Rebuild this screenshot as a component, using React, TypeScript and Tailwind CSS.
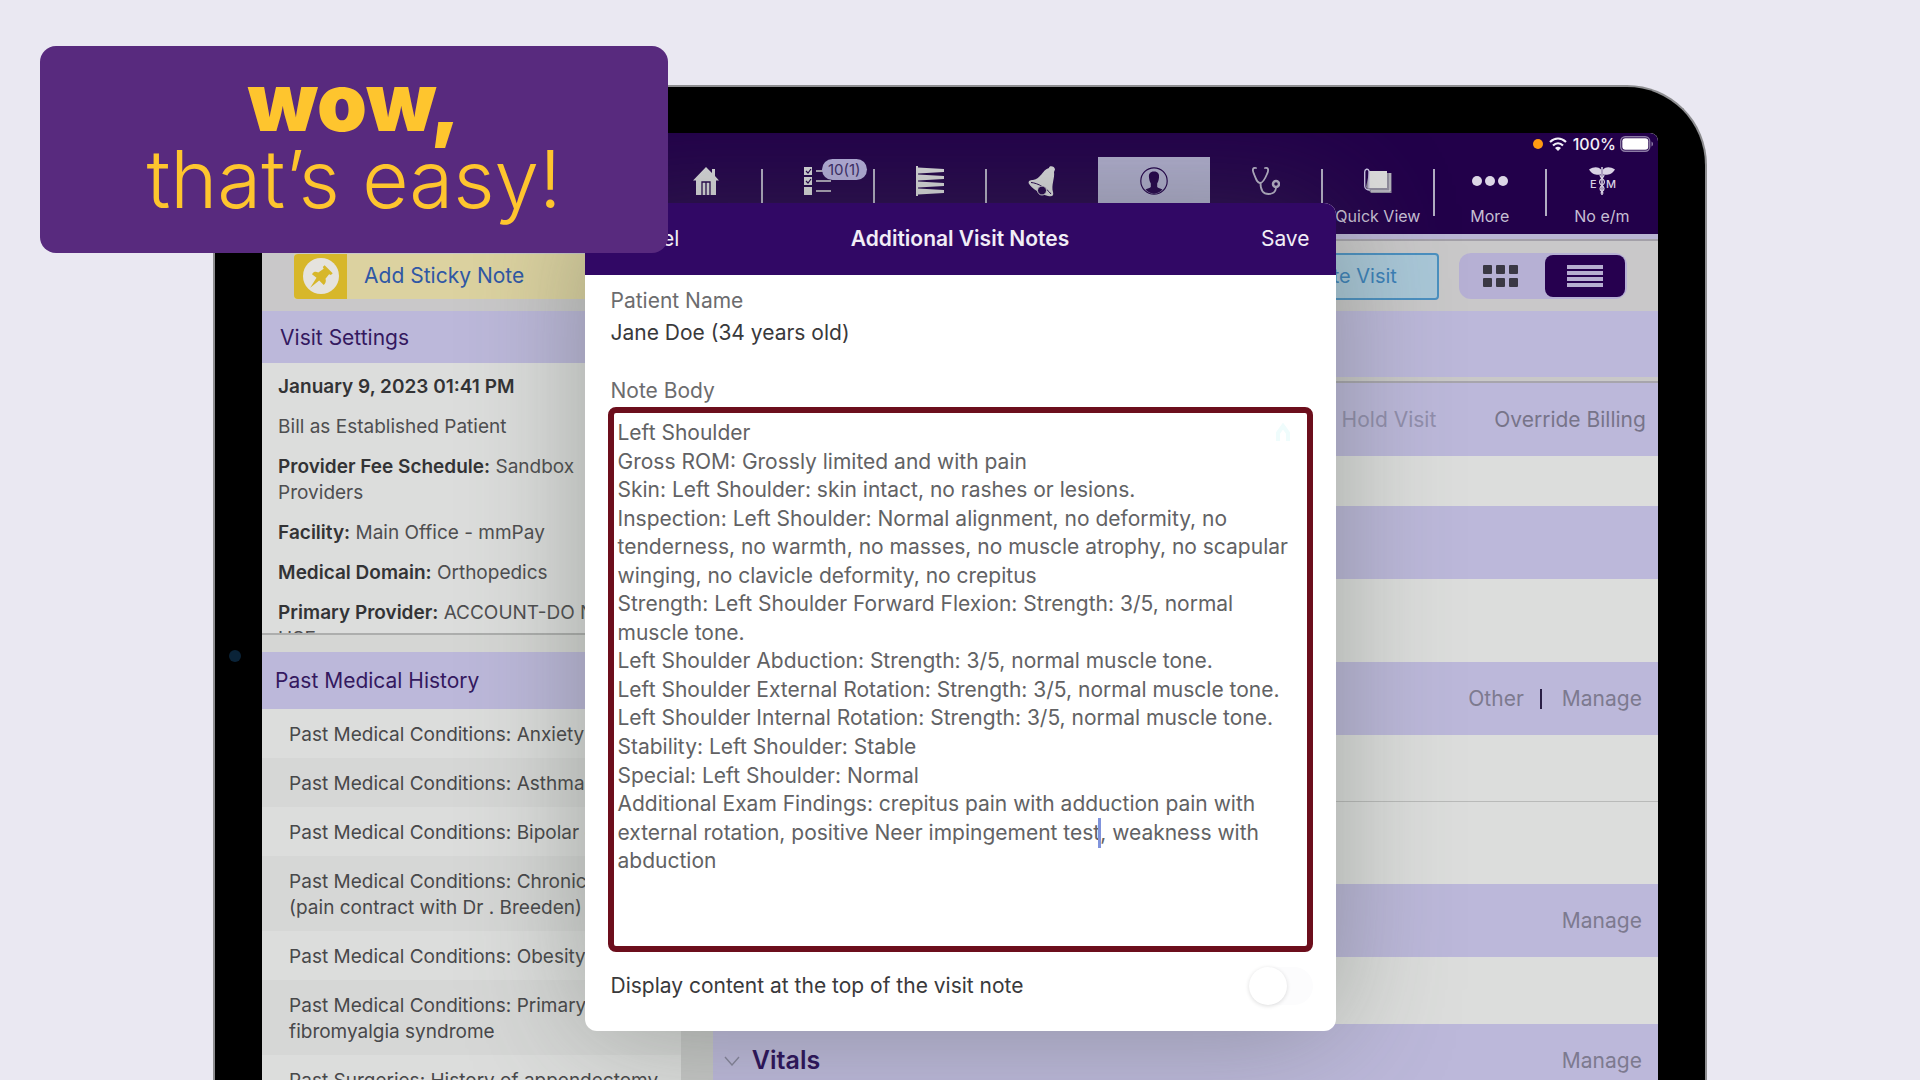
import React, { useState } from "react";

const NOTE = `Left Shoulder
Gross ROM: Grossly limited and with pain
Skin: Left Shoulder: skin intact, no rashes or lesions.
Inspection: Left Shoulder: Normal alignment, no deformity, no tenderness, no warmth, no masses, no muscle atrophy, no scapular winging, no clavicle deformity, no crepitus
Strength: Left Shoulder Forward Flexion: Strength: 3/5, normal muscle tone.
Left Shoulder Abduction: Strength: 3/5, normal muscle tone.
Left Shoulder External Rotation: Strength: 3/5, normal muscle tone.
Left Shoulder Internal Rotation: Strength: 3/5, normal muscle tone.
Stability: Left Shoulder: Stable
Special: Left Shoulder: Normal
Additional Exam Findings: crepitus pain with adduction pain with external rotation, positive Neer impingement test, weakness with abduction`;

const HISTORY = [
  "Past Medical Conditions: Anxiety disorder",
  "Past Medical Conditions: Asthma",
  "Past Medical Conditions: Bipolar disorder",
  "Past Medical Conditions: Chronic pain\n(pain contract with Dr . Breeden)",
  "Past Medical Conditions: Obesity",
  "Past Medical Conditions: Primary\nfibromyalgia syndrome",
  "Past Surgeries: History of appendectomy",
];

const SETTINGS: [string, string][] = [
  ["January 9, 2023 01:41 PM", ""],
  ["", "Bill as Established Patient"],
  ["Provider Fee Schedule:", " Sandbox\nProviders"],
  ["Facility:", " Main Office - mmPay"],
  ["Medical Domain:", " Orthopedics"],
  ["Primary Provider:", " ACCOUNT-DO NOT\nUSE"],
];

function HomeIcon() {
  return (
    <svg viewBox="0 0 28 30" className="h-[30px] w-7" fill="#d9d9dc">
      <path d="M14 1 1 14.500h3V29h20V14.500h3L23 10V3h-3v4Z" />
      <path d="M10 29V16h8v13M14 16v13" fill="none" stroke="#22004a" strokeWidth="1.300" />
    </svg>
  );
}

function ChecklistIcon() {
  return (
    <svg viewBox="0 0 28 30" className="h-[30px] w-7">
      <g fill="#d9d9dc">
        <rect x="0" y="1" width="8" height="8" />
        <rect x="0" y="11" width="8" height="8" />
        <rect x="0" y="21" width="8" height="8" />
      </g>
      <path d="M2 5l2 2 3-4M2 15l2 2 3-4" fill="none" stroke="#22004a" strokeWidth="1.200" />
      <path d="M12 5h15M12 15h15M12 25h15" stroke="#d9d9dc" strokeWidth="1.600" />
    </svg>
  );
}

function StackIcon() {
  return (
    <svg viewBox="0 0 28 30" className="h-[30px] w-7" fill="#d9d9dc">
      <rect x="0" y="0" width="2" height="30" />
      <path d="M2 1.500l26 1.500v3L2 7.500ZM2 8.500l26 1.500v3L2 14.500ZM2 15.500l26 1.500v3L2 21.500ZM2 22.500l26 1.500v3L2 28.500Z" />
    </svg>
  );
}

function BellIcon() {
  return (
    <svg viewBox="0 0 28 32" className="h-8 w-7">
      <path d="M21 3C21 0 27 1 27 4.500L26 7C27 13 23 20 25 27C26 31 24 32 20 31C14 30 3 23 .8 18.500C0 16 2 15 5 15C13 14 14 5 21 3Z" fill="#d9d9dc" />
      <path d="M3 17.500C10 18 19 23.500 23 29" fill="none" stroke="#22004a" strokeWidth="1" />
      <circle cx="14" cy="25.500" r="4.500" fill="#22004a" stroke="#d9d9dc" strokeWidth="1" />
    </svg>
  );
}

function PersonIcon() {
  return (
    <svg viewBox="0 0 28 28" className="size-7">
      <circle cx="14" cy="14" r="13.200" fill="none" stroke="#22004a" strokeWidth="1.200" />
      <path d="M14 4.500c-4 0-5.500 2.500-5 6 .2 2.500 1 4.500 1.800 6v3.500c-1 1.200-3 1.500-5.300 2.500 4.500 5.500 12.500 5.500 17 0-2.300-1-4.300-1.300-5.300-2.500v-3.500c.8-1.500 1.600-3.500 1.800-6 .5-3.500-1-6-5-6Z" fill="#22004a" />
    </svg>
  );
}

function StethoscopeIcon() {
  return (
    <svg viewBox="0 0 28 30" className="h-[30px] w-7" fill="none" stroke="#b6b0c6" strokeWidth="1.800" strokeLinecap="round">
      <path d="M4 2C0 1 .5 5 2 8c2 5 3 9 6 9s5-4 7-9c1.500-3 2-7-2-6" />
      <path d="M8.500 17c0 7 2 11 8 11 5 0 7-2 7.500-6" />
      <circle cx="24" cy="18" r="3" strokeWidth="2.500" />
    </svg>
  );
}

function BookIcon() {
  return (
    <svg viewBox="0 0 28 26" className="h-[26px] w-7">
      <path d="M5 5h22.500v20H7L2 19Z" fill="#8f8b9c" />
      <path d="M26 5v18H7" fill="none" stroke="#d9d9dc" strokeWidth="1" />
      <rect x="5" y="3" width="18" height="17" fill="#dcdcdb" />
      <path d="M5 20V3C4 0 .7 1 .7 4v14c0 3 3 4 5 4" fill="none" stroke="#c6bfe0" strokeWidth="1.400" />
    </svg>
  );
}

function CaduceusIcon() {
  return (
    <svg viewBox="0 0 28 30" className="h-[30px] w-7">
      <path d="M13 8.500C9 9.500 4 8.500 1 3.500c5-3 9-3 12 0ZM15 8.500c4 1 9 0 12-5-5-3-9-3-12 0Z" fill="#d9d3e4" />
      <path d="M14 1v28" stroke="#d9d3e4" strokeWidth="1.500" />
      <path d="M12 9c0 3.500 4.500 3.500 4.500 7s-4.500 3-4.500 6.500 3 2 3 5M16 9c0 3.500-4.500 3.500-4.500 7s4.500 3 4.500 6.500-3 2-3 5" fill="none" stroke="#d9d3e4" strokeWidth="1.200" />
      <text x="2" y="22" fontSize="11" fontWeight="500" fontFamily="Inter, sans-serif" fill="#d9d3e4">E</text>
      <text x="18" y="22" fontSize="11" fontWeight="500" fontFamily="Inter, sans-serif" fill="#d9d3e4">M</text>
    </svg>
  );
}

function NavItem({ children, label, name, active, divider = true }: { children: React.ReactNode; label?: string; name: string; active?: boolean; divider?: boolean }) {
  return (
    <div className={active ? "relative flex w-28 bg-[#aeaccc]" : "relative flex w-28"}>
      <button aria-label={name} className="flex w-full flex-col items-center">
        <span className="flex h-12 items-center">{children}</span>
        {label && <span className="text-base leading-[22px] whitespace-nowrap text-[#c6bfd3]">{label}</span>}
      </button>
      {divider && <span className="absolute top-3 -right-px h-[47px] w-0.5 bg-[#b1adc2]" />}
    </div>
  );
}

function Header() {
  return (
    <header className="h-[101px] rounded-t-lg bg-[#22004a]">
      <div className="flex h-[22px] items-center justify-end gap-1 pr-1">
        <span className="size-2.5 rounded-full bg-[#ff9a12]" />
        <svg viewBox="0 0 18 14" className="ml-0.5 h-3.5 w-[18px]" fill="none" stroke="#f3f0f8" strokeWidth="2.200">
          <path d="M1 5c5-4.500 11-4.500 16 0M4 8.500c3-3 7-3 10 0" />
          <path d="M9 14l-3-3c2-1.600 4-1.600 6 0Z" fill="#f3f0f8" stroke="none" />
        </svg>
        <span className="ml-0.5 text-base leading-5 font-medium text-[#f3f0f8]">100%</span>
        <svg viewBox="0 0 34 16" className="h-4 w-[34px]">
          <rect x=".7" y=".7" width="29" height="14.600" rx="4.500" fill="none" stroke="#8c7ba5" strokeWidth="1.400" />
          <rect x="2.300" y="2.300" width="26" height="11.400" rx="3" fill="#fff" />
          <path d="M31.500 5.500c2 .7 2 4.300 0 5Z" fill="#8c7ba5" />
        </svg>
      </div>
      <nav className="mt-0.5 flex h-[77px] justify-end">
        <NavItem name="Home"><HomeIcon /></NavItem>
        <NavItem name="Tasks">
          <ChecklistIcon />
          <span className="absolute top-0.5 left-[60px] rounded-full bg-[#b4addb] px-1.5 text-[15px] leading-[21px] text-[#3b2a66]">10(1)</span>
        </NavItem>
        <NavItem name="Schedule"><StackIcon /></NavItem>
        <NavItem name="Reminders" divider={false}><BellIcon /></NavItem>
        <NavItem name="Patient" active divider={false}><PersonIcon /></NavItem>
        <NavItem name="Exam"><StethoscopeIcon /></NavItem>
        <NavItem name="Quick View" label="Quick View"><BookIcon /></NavItem>
        <NavItem name="More" label="More">
          <svg viewBox="0 0 36 10" className="h-2.5 w-9" fill="#dcd6e6">
            <circle cx="5" cy="5" r="5" /><circle cx="18" cy="5" r="5" /><circle cx="31" cy="5" r="5" />
          </svg>
        </NavItem>
        <NavItem name="No e/m" label="No e/m" divider={false}><CaduceusIcon /></NavItem>
      </nav>
    </header>
  );
}

function Toolbar() {
  return (
    <div className="flex h-[77px] items-center border-t-[5px] border-[#b9b5d3] bg-[#c9c8c9] pt-0.5 shadow-[inset_0_2px_0_#a3a0a8]">
      <div className="flex w-[30%] pl-8">
        <button className="flex h-[45px] w-full items-center bg-[#dcd2a0]">
          <span className="flex h-full w-[53px] items-center justify-center rounded-l-sm bg-[#d7b72a]">
            <svg viewBox="0 0 40 40" className="size-9">
              <circle cx="20" cy="20" r="20" fill="#e5e3de" />
              <path d="M24 8l9 9-2 2-2-1-4 5c1 3 0 5-2 7l-5-5L8 33l7-11-5-4c2-3 4-3 7-2l6-4-1-2Z" fill="#d7b72a" />
            </svg>
          </span>
          <span className="pl-[17px] text-[21px] text-[#2f57a5]">Add Sticky Note</span>
        </button>
      </div>
      <div className="flex flex-1 items-center justify-end gap-5 pr-[31px]">
        <button className="h-[47px] rounded border-2 border-[#4a8fc0] bg-[#a9c7d8] px-10 text-xl text-[#3a80b8]">Complete Visit</button>
        <div className="flex h-[46px] w-[168px] items-center rounded-xl bg-[#b6b0d4] p-0.5">
          <button aria-label="Grid view" className="flex h-full flex-1 items-center justify-center pr-1">
            <svg viewBox="0 0 36 23" className="h-[23px] w-9" fill="#3a3844">
              <rect width="9" height="9" rx="1" /><rect x="13" width="9" height="9" rx="1" /><rect x="26" width="9" height="9" rx="1" />
              <rect y="13" width="9" height="9" rx="1" /><rect x="13" y="13" width="9" height="9" rx="1" /><rect x="26" y="13" width="9" height="9" rx="1" />
            </svg>
          </button>
          <button aria-label="List view" className="flex h-full w-20 items-center justify-center rounded-lg bg-[#26004f]">
            <svg viewBox="0 0 36 24" className="h-6 w-9" stroke="#b6aed0" strokeWidth="4">
              <path d="M0 3h36M0 9h36M0 15h36M0 21h36" />
            </svg>
          </button>
        </div>
      </div>
    </div>
  );
}

function Sidebar() {
  return (
    <aside className="w-[30%] shrink-0">
      <section className="h-[324px] overflow-hidden border-b-2 border-[#adaead] bg-[#dcdddc]">
        <h2 className="h-[52px] bg-[#bcb8da] pl-[18px] text-[21px] leading-[54px] text-[#34195f]">Visit Settings</h2>
        <div className="flex flex-col gap-3.5 pt-[11px] pl-4 text-[19px] leading-[26px] whitespace-pre text-[#4e4e50]">
          {SETTINGS.map(([term, value]) => (
            <p key={term + value}>
              <strong className="font-semibold text-[#333335]">{term}</strong>
              {value}
            </p>
          ))}
        </div>
      </section>
      <div className="h-[17px] bg-[#d5d6d4]" />
      <section>
        <h2 className="h-[57px] bg-[#bcb8da] pl-[13px] text-[21px] leading-[57px] text-[#34195f]">Past Medical History</h2>
        <ul className="text-[19px] leading-[26px] whitespace-pre text-[#48484a]">
          {HISTORY.map((item) => (
            <li key={item} className="bg-[#dcdddc] pt-[13px] pb-2.5 pl-[27px] even:bg-[#d6d7d6]">{item}</li>
          ))}
        </ul>
      </section>
    </aside>
  );
}

function VisitSections() {
  return (
    <main className="flex flex-1 flex-col bg-[#dcdddc] text-[21px] text-[#7d7a8f]">
      <div className="h-[66px] bg-[#bcb8da]" />
      <div className="h-[6px] border-b-2 border-[#a7a5ac] bg-[#c9c8c8]" />
      <div className="flex h-[73px] items-center justify-end gap-[58px] bg-[#bcb8da] pr-3">
        <button className="text-[#918eac]">Hold Visit</button>
        <button className="text-[#777489]">Override Billing</button>
      </div>
      <div className="h-[50px]" />
      <div className="h-[73px] bg-[#bcb8da]" />
      <div className="h-[83px]" />
      <div className="flex h-[73px] items-center justify-end bg-[#bcb8da] pr-4">
        <button>Other</button>
        <span className="mr-5 ml-4 h-5 w-0.5 bg-[#2a1f45]" />
        <button>Manage</button>
      </div>
      <div className="h-[67px] border-b border-[#b9bab9]" />
      <div className="h-[82px]" />
      <div className="flex h-[73px] items-center justify-end bg-[#bcb8da] pr-4"><button>Manage</button></div>
      <div className="h-[67px]" />
      <div className="flex h-[73px] items-center justify-between bg-[#bcb8da] pr-4 pl-[11px]">
        <h2 className="flex items-center gap-3 text-[25px] font-semibold text-[#2a0f5a]">
          <svg viewBox="0 0 16 10" className="h-2.5 w-4" fill="none" stroke="#85839a" strokeWidth="1.400"><path d="M1 1l7 8 7-8" /></svg>
          Vitals
        </h2>
        <button>Manage</button>
      </div>
    </main>
  );
}

function NotesModal() {
  const [note, setNote] = useState(NOTE);
  const [top, setTop] = useState(false);
  return (
    <div role="dialog" aria-labelledby="modal-title" className="h-[828px] w-[751px] overflow-hidden rounded-xl bg-white text-[21px] shadow-[0_0_120px_rgba(70,80,70,0.4)]">
      <div className="grid h-[72px] grid-cols-[1fr_auto_1fr] items-center bg-[#310865] px-[26px] text-[#f1edf6]">
        <button className="justify-self-start">Cancel</button>
        <h1 id="modal-title" className="font-semibold">Additional Visit Notes</h1>
        <button className="justify-self-end">Save</button>
      </div>
      <div className="px-[23px] pt-[10px]">
        <div className="px-[3px] leading-8">
          <p className="text-[#6c6c6e]">Patient Name</p>
          <p className="text-[#39393b]">Jane Doe (34 years old)</p>
          <label htmlFor="note" className="mt-[26px] block text-[#6c6c6e]">Note Body</label>
        </div>
        <div className="relative h-[545px] rounded-lg border-[6px] border-[#6c0e1c]">
          <textarea
            id="note"
            value={note}
            onChange={(e) => setNote(e.target.value)}
            spellCheck={false}
            className="block h-full w-full resize-none overflow-hidden bg-transparent pt-1.5 pr-3 pl-1 leading-[1.36] text-[#626264] outline-none"
          />
          <span className="absolute top-[405px] left-[484px] h-[30px] w-[3px] bg-[#8093dc]" />
          <svg viewBox="0 0 16 20" className="absolute top-2.5 right-4 h-5 w-4" fill="none" stroke="#effcfc" strokeWidth="4"><path d="M3 18V10l5-7 5 7v8" /></svg>
        </div>
        <div className="mt-[15px] flex items-center justify-between pl-[3px]">
          <label htmlFor="display-top" className="text-[#39393b]">Display content at the top of the visit note</label>
          <input
            id="display-top"
            type="checkbox"
            role="switch"
            checked={top}
            onChange={(e) => setTop(e.target.checked)}
            className="h-[38px] w-16 appearance-none rounded-full bg-[#fcfcfd] before:block before:size-[38px] before:rounded-full before:bg-white before:shadow-[0_1px_4px_rgba(0,0,0,0.14)] before:content-[''] checked:bg-[#310865] checked:before:ml-auto"
          />
        </div>
      </div>
    </div>
  );
}

export default function App() {
  return (
    <div className="relative h-screen overflow-hidden bg-[#eae8f2] px-[11.1%] pt-[85px] font-['Inter',sans-serif]">
      <div className="relative rounded-t-[80px] border-2 border-b-0 border-[#8d8d90] bg-black px-[47px] pt-[46px]">
        <span className="absolute top-[563px] left-3.5 size-3 rounded-full bg-[#0a2338]" />
        <div className="relative h-screen overflow-hidden rounded-t-lg bg-[#c5c6c5]">
          <Header />
          <Toolbar />
          <div className="flex gap-8">
            <Sidebar />
            <VisitSections />
          </div>
          <div className="absolute inset-x-0 top-[70px] flex justify-center">
            <NotesModal />
          </div>
        </div>
      </div>
      <div className="absolute top-[46px] left-10 flex h-[207px] w-[628px] flex-col items-center justify-center rounded-2xl bg-[#582a7e] pb-5 text-[#fec52e]">
        <p className="text-[80px] leading-[77px] font-black">wow,</p>
        <p className="text-[80px] leading-[77px] font-light">that’s easy!</p>
      </div>
    </div>
  );
}
